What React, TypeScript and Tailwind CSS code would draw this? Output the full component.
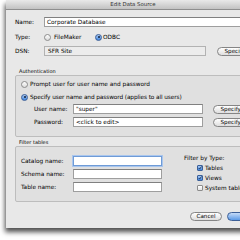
import { FC, ReactNode } from "react";

const font = { fontFamily: '"DejaVu Sans", "Liberation Sans", sans-serif' };

//Aqua style radio button
const Radio: FC<{ on?: boolean }> = ({ on }) =>
  on ? (
    <span className="flex h-[7px] w-[7px] shrink-0 items-center justify-center rounded-full border border-[#3a5f99] bg-gradient-to-b from-[#a9c8f0] to-[#3f86e0]">
      <span className="h-[2px] w-[2px] rounded-full bg-[#10203a]" />
    </span>
  ) : (
    <span className="h-[7px] w-[7px] shrink-0 rounded-full border border-[#8c8c8c] bg-gradient-to-b from-[#fdfdfd] to-[#dcdcdc]" />
  );

const Check: FC<{ on?: boolean }> = ({ on }) =>
  on ? (
    <span className="flex h-[6px] w-[6px] shrink-0 items-center justify-center rounded-[1px] border border-[#3a5f99] bg-gradient-to-b from-[#a9c8f0] to-[#3f86e0]">
      <svg viewBox="0 0 6 6" className="h-[6px] w-[6px]">
        <path d="M1 3 L2.5 4.6 L5.4 0.6" stroke="#0f1c33" strokeWidth="1.1" fill="none" />
      </svg>
    </span>
  ) : (
    <span className="h-[6px] w-[6px] shrink-0 rounded-[1px] border border-[#8c8c8c] bg-gradient-to-b from-[#ffffff] to-[#e2e2e2]" />
  );

const Button: FC<{ children: ReactNode; w: string; primary?: boolean }> = ({ children, w, primary }) => (
  <span
    className={
      primary
        ? `flex h-[9px] ${w} items-center justify-center rounded-full border border-[#3c5f97] bg-gradient-to-b from-[#c5dbf7] to-[#5b9ae6] text-[5.6px] text-black`
        : `flex h-[9px] ${w} items-center justify-center rounded-full border border-[#858585] bg-gradient-to-b from-[#ffffff] to-[#dedede] text-[5.6px] text-black`
    }
  >
    {children}
  </span>
);

const Field: FC<{ w: string; value?: string; focus?: boolean }> = ({ w, value, focus }) => (
  <span
    className={
      focus
        ? `flex h-[10px] ${w} items-center border border-[#6f9bd6] bg-white pl-[2px] shadow-[0_0_0_1px_#a9c6ee]`
        : `flex h-[10px] ${w} items-center border border-[#9e9e9e] border-t-[#808080] bg-white pl-[2px]`
    }
  >
    {value}
  </span>
);

const App: FC = () => {
  return (
    <div className="relative h-[240px] w-[240px] overflow-hidden bg-white text-black" style={font}>
      <div className="absolute left-[6px] top-0 flex h-[228px] w-[262px] flex-col bg-[#e8e8e8] text-[5.8px] shadow-[-1px_4px_5px_rgba(0,0,0,0.7)]">
        {/* title bar */}
        <div className="flex h-[10px] shrink-0 items-center justify-center border-b border-[#8e8e8e] bg-gradient-to-b from-[#e9e9e9] to-[#c2c2c2] pr-[8px] text-[5.4px] text-[#333]">
          Edit Data Source
        </div>

        {/* name */}
        <div className="mt-[7px] flex h-[10px] items-center pl-[9px]">
          <span className="w-[29px]">Name:</span>
          <Field w="w-[220px]" value="Corporate Database" />
        </div>

        {/* type */}
        <div className="mt-[5px] flex h-[10px] items-center pl-[9px]">
          <span className="w-[29px]">Type:</span>
          <span className="flex w-[51px] items-center gap-[3px]">
            <Radio />
            FileMaker
          </span>
          <span className="flex items-center gap-[1px]">
            <Radio on />
            ODBC
          </span>
        </div>

        {/* dsn */}
        <div className="mt-[4px] flex h-[10px] items-center pl-[9px]">
          <span className="w-[29px]">DSN:</span>
          <span className="flex h-[10px] w-[162px] items-center border border-[#b2b2b2] bg-[#ececec] pl-[3px]">SFR Site</span>
          <span className="ml-[11px]">
            <Button w="w-[40px]">Specify...</Button>
          </span>
        </div>

        {/* authentication */}
        <div className="mt-[12px] h-[6px] pl-[13px] text-[5px] leading-[6px]">Authentication</div>
        <div className="ml-[9px] mr-[9px] mt-[1px] flex h-[62px] flex-col rounded-[2px] border border-[#bdbdbd] bg-[#e0e0e0] pl-[5px]">
          <div className="mt-[4px] flex h-[8px] items-center gap-[2px] whitespace-nowrap">
            <Radio />
            Prompt user for user name and password
          </div>
          <div className="mt-[5px] flex h-[8px] items-center gap-[2px] whitespace-nowrap tracking-[-0.1px]">
            <Radio on />
            Specify user name and password (applies to all users)
          </div>
          <div className="mt-[3px] flex h-[10px] items-center pl-[13px]">
            <span className="w-[39px]">User name:</span>
            <Field w="w-[130px]" value={'"super"'} />
            <span className="ml-[10px]">
              <Button w="w-[40px]">Specify...</Button>
            </span>
          </div>
          <div className="mt-[3px] flex h-[10px] items-center pl-[13px]">
            <span className="w-[39px]">Password:</span>
            <Field w="w-[130px]" value="<click to edit>" />
            <span className="ml-[10px]">
              <Button w="w-[40px]">Specify...</Button>
            </span>
          </div>
        </div>

        {/* filter tables */}
        <div className="mt-[2px] h-[6px] pl-[13px] text-[5px] leading-[6px]">Filter tables</div>
        <div className="ml-[9px] mr-[9px] mt-[1px] flex h-[56px] rounded-[2px] border border-[#bdbdbd] bg-[#e0e0e0] pl-[5px]">
          <div className="flex w-[163px] flex-col pt-[9px]">
            <div className="flex h-[10px] items-center">
              <span className="w-[52px]">Catalog name:</span>
              <Field w="w-[89px]" focus />
            </div>
            <div className="mt-[3px] flex h-[10px] items-center">
              <span className="w-[52px]">Schema name:</span>
              <Field w="w-[89px]" />
            </div>
            <div className="mt-[3px] flex h-[10px] items-center">
              <span className="w-[52px]">Table name:</span>
              <Field w="w-[89px]" />
            </div>
          </div>
          <div className="flex flex-col pt-[8px]">
            <div className="flex h-[7px] items-center whitespace-nowrap">Filter by Type:</div>
            <div className="flex flex-col pl-[13px] pt-[1px]">
              <div className="flex h-[10px] items-center gap-[2px]">
                <Check on />
                Tables
              </div>
              <div className="flex h-[10px] items-center gap-[2px]">
                <Check on />
                Views
              </div>
              <div className="flex h-[10px] items-center gap-[2px] whitespace-nowrap">
                <Check />
                System tables
              </div>
            </div>
          </div>
        </div>

        {/* buttons */}
        <div className="mt-[10px] flex items-center gap-[5px] pl-[184px]">
          <Button w="w-[32px]">Cancel</Button>
          <Button w="w-[38px]" primary>
            OK
          </Button>
        </div>
      </div>
    </div>
  );
};

export default App;
